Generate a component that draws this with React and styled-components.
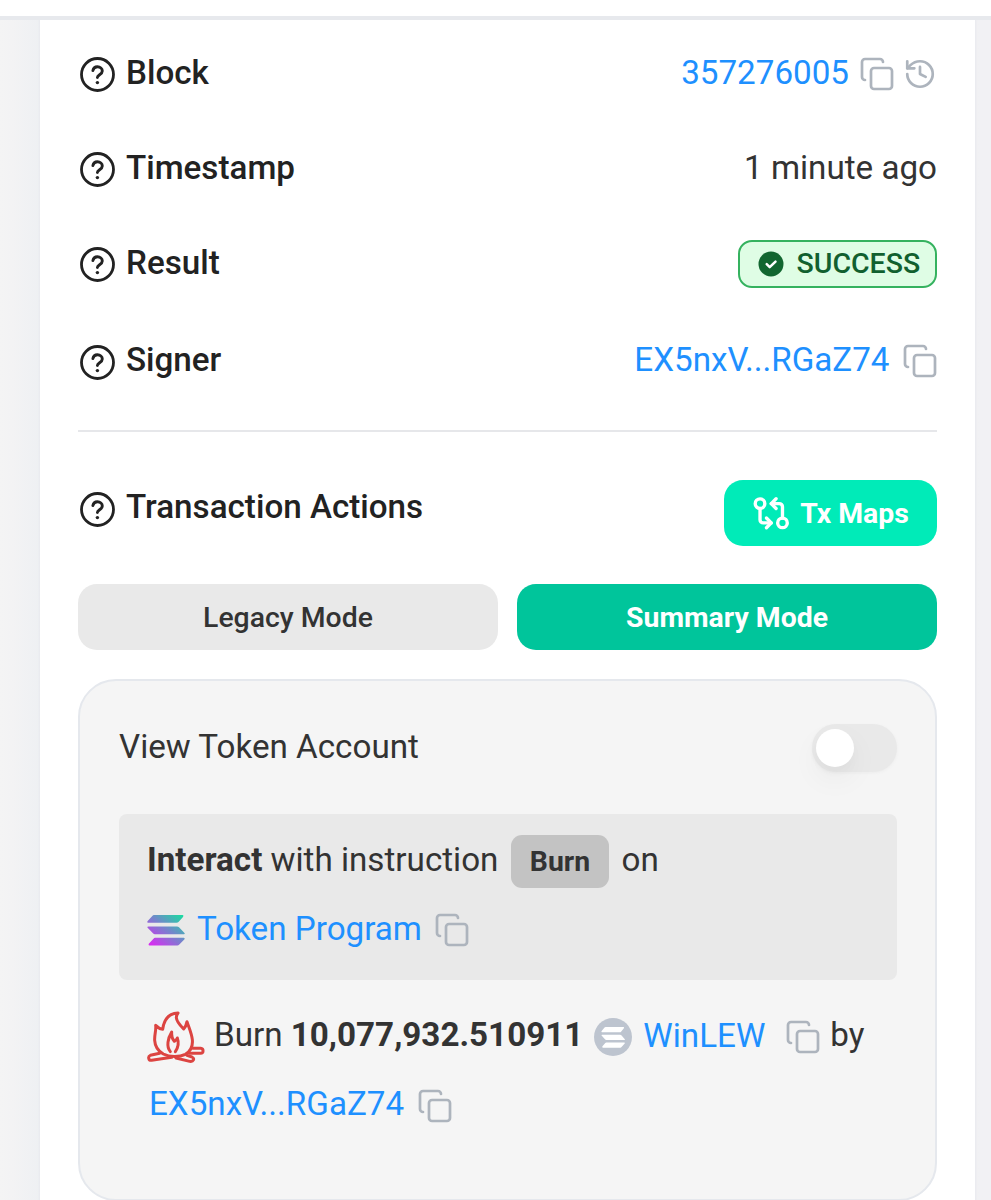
import React from "react";
import styled, { createGlobalStyle } from "styled-components";
import { Copy, History, GitCompareArrows } from "lucide-react";

const GlobalStyle = createGlobalStyle`
  *, *::before, *::after { box-sizing: border-box; }
  html, body { margin: 0; padding: 0; height: 1200px; overflow: hidden; }
  body {
    font-family: Roboto, "Liberation Sans", sans-serif;
    font-size: 33.2px;
    color: #333;
    background: #fff;
  }
  svg { display: block; flex: none; }
`;

const Page = styled.div`
  height: 1200px;
  display: flex;
  flex-direction: column;
  overflow: hidden;
`;

const TopBar = styled.header`
  flex: none;
  height: 20px;
  background: #fff;
  border-bottom: 4px solid #e7e9ed;
`;

const Content = styled.main`
  flex: 1;
  min-height: 0;
  padding: 0 16px 0 40px;
  overflow: hidden;
  background: linear-gradient(90deg, #f4f4f4 0, #f3f3f4 12px, #eef0f3 40px, #f1f1f4 100%);
`;

const Card = styled.section`
  height: 1181px;
  padding: 5px 38px 0 38px;
  background: #fff;
  box-shadow: 0 0 2px 1px #e8eaee;
  display: flex;
  flex-direction: column;
`;

const Row = styled.div`
  flex: none;
  height: ${(p) => p.$h || 95}px;
  display: flex;
  align-items: center;
  justify-content: space-between;
`;

const Label = styled.div`
  display: flex;
  align-items: center;
  gap: 11px;
  font-weight: 500;
  color: #222;
  line-height: 40px;
  padding-left: 2px;
  svg { position: relative; top: 2px; }
`;

const Value = styled.div`
  display: flex;
  align-items: center;
  line-height: 40px;
  color: #333;
`;

const Link = styled.a`
  color: #1e90ff;
  margin-left: ${(p) => p.$ml || 0}px;
  padding-top: ${(p) => p.$pt || 0}px;
`;

const IconSlot = styled.span`
  flex: none;
  color: #adb4bd;
  margin-left: ${(p) => p.$ml || 0}px;
  margin-right: ${(p) => p.$mr || 0}px;
  padding-top: ${(p) => p.$pt || 0}px;
`;

const StatusBadge = styled.span`
  display: flex;
  align-items: center;
  gap: 12.5px;
  height: 48px;
  width: 199px;
  padding: 0 0 0 18px;
  margin-top: 2px;
  border: 2px solid #35b25f;
  border-radius: 14px;
  background: #dffde5;
  color: #11602f;
  font-size: 28.5px;
  font-weight: 500;
`;

const Divider = styled.hr`
  flex: none;
  width: 100%;
  height: 2px;
  margin: 20px 0 48px;
  border: 0;
  background: #e6e7ea;
`;

const Button = styled.button`
  display: flex;
  align-items: center;
  justify-content: center;
  gap: 9.5px;
  flex: ${(p) => (p.$wide ? "1" : "none")};
  width: ${(p) => (p.$wide ? "auto" : "213px")};
  height: 66px;
  padding: 0;
  border: 0;
  border-radius: 19px;
  font: ${(p) => p.$weight || 700} 28.4px Roboto, "Liberation Sans", sans-serif;
  background: ${(p) => p.$bg};
  color: ${(p) => p.$fg || "#fff"};
`;

const ActionsHeader = styled.div`
  flex: none;
  display: flex;
  align-items: flex-start;
  justify-content: space-between;
  ${Label} { margin-top: 7px; }
`;

const ModeSwitch = styled.div`
  flex: none;
  display: flex;
  gap: 19px;
  margin: 38px 0 29px;
`;

const Panel = styled.section`
  flex: none;
  height: 522px;
  padding: 42px 38px 0 39px;
  border: 2px solid #e5e8ed;
  border-radius: 38px;
  background: #f5f5f5;
`;

const PanelHeader = styled.div`
  display: flex;
  align-items: center;
  justify-content: space-between;
  height: 50px;
  line-height: 40px;
  > span:first-child { margin-top: -2px; }
`;

const Toggle = styled.span`
  width: 85px;
  height: 48px;
  padding: 5px 4px;
  border-radius: 24px;
  background: #e9e9e9;
  box-shadow: 0 1px 3px #ececec;
`;

const Knob = styled.span`
  display: block;
  width: 38px;
  height: 38px;
  border-radius: 50%;
  background: #fff;
  box-shadow: 0 6px 12px rgba(0, 0, 0, 0.02), 0 12px 30px rgba(0, 0, 0, 0.05);
`;

const Instruction = styled.div`
  height: 166px;
  margin-top: 41px;
  padding: 11px 28px 0;
  border-radius: 8px;
  background: #e9e9e9;
`;

const Line = styled.div`
  display: flex;
  align-items: center;
  height: 69px;
  line-height: 40px;
  white-space: pre;
`;

const Tag = styled.span`
  display: flex;
  align-items: center;
  justify-content: center;
  width: 98px;
  height: 53px;
  margin: 4px 12px 0 13px;
  padding-right: 1px;
  border-radius: 11px;
  background: #c3c3c3;
  font-size: 28.4px;
  font-weight: 700;
`;

const Transfer = styled.div`
  padding: 20px 0 0 28px;
`;

const HelpIcon = () => (
  <svg width="35" height="35" viewBox="0 0 35 35" fill="none" stroke="#222" strokeWidth="2.8" strokeLinecap="round" strokeLinejoin="round">
    <circle cx="17.5" cy="17.5" r="16" />
    <path d="M12.9 13.5C13.4 11.1 15 9.8 17.4 9.8c2.8 0 4.9 1.9 4.9 4.2 0 3.6-4.9 3.8-4.9 6.5" strokeWidth="2.9" />
    <circle cx="17.4" cy="25.6" r="1.7" fill="#222" stroke="none" />
  </svg>
);

const CopyIcon = () => <Copy size={36} strokeWidth={1.8} />;

const CheckIcon = () => (
  <svg width="26" height="26" viewBox="0 0 26 26" fill="none">
    <circle cx="13" cy="13" r="12.5" fill="#126630" />
    <path d="M8.7 13.2l3 3 5.8-5.6" stroke="#fff" strokeWidth="2.5" strokeLinecap="round" strokeLinejoin="round" />
  </svg>
);

const bars = [
  "M7 0H35.5Q37 .3 36 2L31.5 7Q30.8 7.8 29.5 7.8H1Q-.3 7.4 .7 6L5.3 1Q6 0 7 0Z",
  "M1.5 11.4H30Q31.3 11.4 32 12.3L37.5 18Q38.2 19.2 37 19.2H8Q6.7 19.2 6 18.3L.6 12.7Q-.2 11.5 1.5 11.4Z",
  "M8 22.8H36.8Q38.2 23.1 37.3 24.5L32.3 29.6Q31.5 30.5 30.3 30.5H2.5Q1 30.2 2 28.6L6.5 23.7Q7.2 22.8 8 22.8Z",
];

const SolanaIcon = () => (
  <svg width="38" height="31" viewBox="0 0 38 31">
    <defs>
      <linearGradient id="sol" gradientUnits="userSpaceOnUse" x1="34" y1="-1" x2="8" y2="32">
        <stop offset="0" stopColor="#19dca0" />
        <stop offset="0.5" stopColor="#7782cd" />
        <stop offset="1" stopColor="#d52ff0" />
      </linearGradient>
    </defs>
    {bars.map((d) => <path key={d} d={d} fill="url(#sol)" />)}
  </svg>
);

const TokenIcon = () => (
  <svg width="38" height="38" viewBox="0 0 38 38">
    <circle cx="19" cy="19" r="19" fill="#bdc4cf" />
    <g transform="translate(7.2 8.9) scale(.63 .68)" fill="#fff">
      {bars.map((d) => <path key={d} d={d} />)}
    </g>
  </svg>
);

const FireIcon = () => (
  <svg width="58" height="52" viewBox="50 34 174 156" fill="none" stroke="#dc4441" strokeWidth="9" strokeLinecap="round" strokeLinejoin="round">
    <path d="M143 40C117 41 101 59 97 89C89 88 82 83 76 77C78 92 72 104 73 122C74 139 83 154 99 163C118 173 147 173 165 164C181 155 188 140 186 120C184 101 177 87 170 66C168 76 165 83 160 88C151 79 139 67 138 54C138 48 140 44 143 40Z" />
    <path d="M120 156C107 140 113 115 124 97C123 109 127 119 132 125C136 123 139 120 141 115C146 129 144 143 135 156" />
    <path d="M88 161L60 167C52 170 54 183 64 182L124 173" />
    <path d="M137 175L178 185C190 187 194 176 185 172L170 167" />
    <path d="M188 146H211C221 147 220 161 211 161H177" />
  </svg>
);

export default function App() {
  return (
    <Page>
      <GlobalStyle />
      <TopBar />
      <Content>
        <Card>
          <Row>
            <Label><HelpIcon />Block</Label>
            <Value>
              <Link>357276005</Link>
              <IconSlot $ml={10} $pt={2}><CopyIcon /></IconSlot>
              <IconSlot $ml={8} $pt={3}><History size={34} strokeWidth={1.9} /></IconSlot>
            </Value>
          </Row>
          <Row>
            <Label><HelpIcon />Timestamp</Label>
            <Value>1 minute ago</Value>
          </Row>
          <Row>
            <Label><HelpIcon />Result</Label>
            <StatusBadge><CheckIcon />SUCCESS</StatusBadge>
          </Row>
          <Row $h={100}>
            <Label><HelpIcon />Signer</Label>
            <Value>
              <Link>EX5nxV...RGaZ74</Link>
              <IconSlot $ml={12} $mr={-0.5} $pt={2}><CopyIcon /></IconSlot>
            </Value>
          </Row>
          <Divider />
          <ActionsHeader>
            <Label><HelpIcon />Transaction Actions</Label>
            <Button $bg="#00ebb8"><GitCompareArrows size={38.5} strokeWidth={2.1} />Tx Maps</Button>
          </ActionsHeader>
          <ModeSwitch>
            <Button $wide $bg="#e9e9e9" $fg="#333" $weight={500}>Legacy Mode</Button>
            <Button $wide $bg="#00c59b">Summary Mode</Button>
          </ModeSwitch>
          <Panel>
            <PanelHeader>
              <span>View Token Account</span>
              <Toggle><Knob /></Toggle>
            </PanelHeader>
            <Instruction>
              <Line>
                <span><b>Interact</b> with instruction</span>
                <Tag>Burn</Tag>
                <span>on</span>
              </Line>
              <Line>
                <IconSlot $mr={12} $pt={3}><SolanaIcon /></IconSlot>
                <Link>Token Program</Link>
                <IconSlot $ml={12} $pt={2}><CopyIcon /></IconSlot>
              </Line>
            </Instruction>
            <Transfer>
              <Line>
                <IconSlot $mr={9} $pt={4}><FireIcon /></IconSlot>
                <span>Burn <b>10,077,932.510911</b></span>
                <IconSlot $ml={11} $mr={11} $pt={4}><TokenIcon /></IconSlot>
                <Link $pt={2}>WinLEW</Link>
                <IconSlot $ml={20} $mr={9} $pt={4}><CopyIcon /></IconSlot>
                <span>by</span>
              </Line>
              <Line>
                <Link $ml={2}>EX5nxV...RGaZ74</Link>
                <IconSlot $ml={13} $pt={4}><CopyIcon /></IconSlot>
              </Line>
            </Transfer>
          </Panel>
        </Card>
      </Content>
    </Page>
  );
}
